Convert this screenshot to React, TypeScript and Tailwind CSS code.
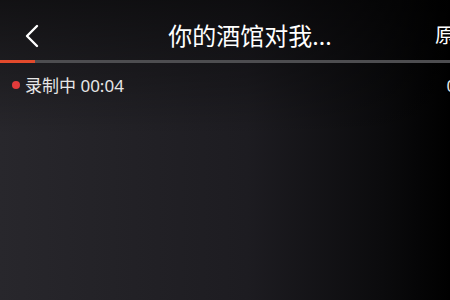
import React from 'react';

const App: React.FC = () => {
  return (
    <div
      className="w-[450px] h-[300px] overflow-hidden bg-[linear-gradient(to_bottom,rgba(0,0,0,0.55),rgba(0,0,0,0)_45%),linear-gradient(to_right,#28272c_0%,#1d1c21_55%,#0b0b0d_85%,#000000_100%)] text-white"
      style={{ fontFamily: '"Noto Sans", "Noto Sans CJK SC", sans-serif' }}
    >
      <div className="w-[500px]">
        <div className="flex items-center h-[60px] pt-[12px]">
          <div className="w-[150px] pl-[24px] flex items-center">
            <svg width="16" height="24" viewBox="0 0 16 24" fill="none">
              <path d="M13 2 L3 12 L13 22" stroke="#ffffff" strokeWidth="2.4" strokeLinecap="round" strokeLinejoin="round" />
            </svg>
          </div>
          <div className="w-[200px] text-center text-[24px] leading-none whitespace-nowrap">你的酒馆对我...</div>
          <div className="pl-[85px] text-[20px] leading-none whitespace-nowrap">原文</div>
        </div>
        <div className="flex h-[3px]">
          <div className="w-[35px] bg-[#e24a2c]" />
          <div className="flex-1 bg-[#4d4d50]" />
        </div>
        <div className="flex items-center h-[44px] pl-[12px]">
          <span className="w-[8px] h-[8px] rounded-full bg-[#e23b3b]" />
          <span className="ml-[5px] text-[17px] text-[#e6e6e6] leading-none">录制中 00:04</span>
          <span className="ml-auto pr-[10px] text-[17px] text-[#e6e6e6] leading-none">00:12</span>
        </div>
      </div>
    </div>
  );
};

export default App;
